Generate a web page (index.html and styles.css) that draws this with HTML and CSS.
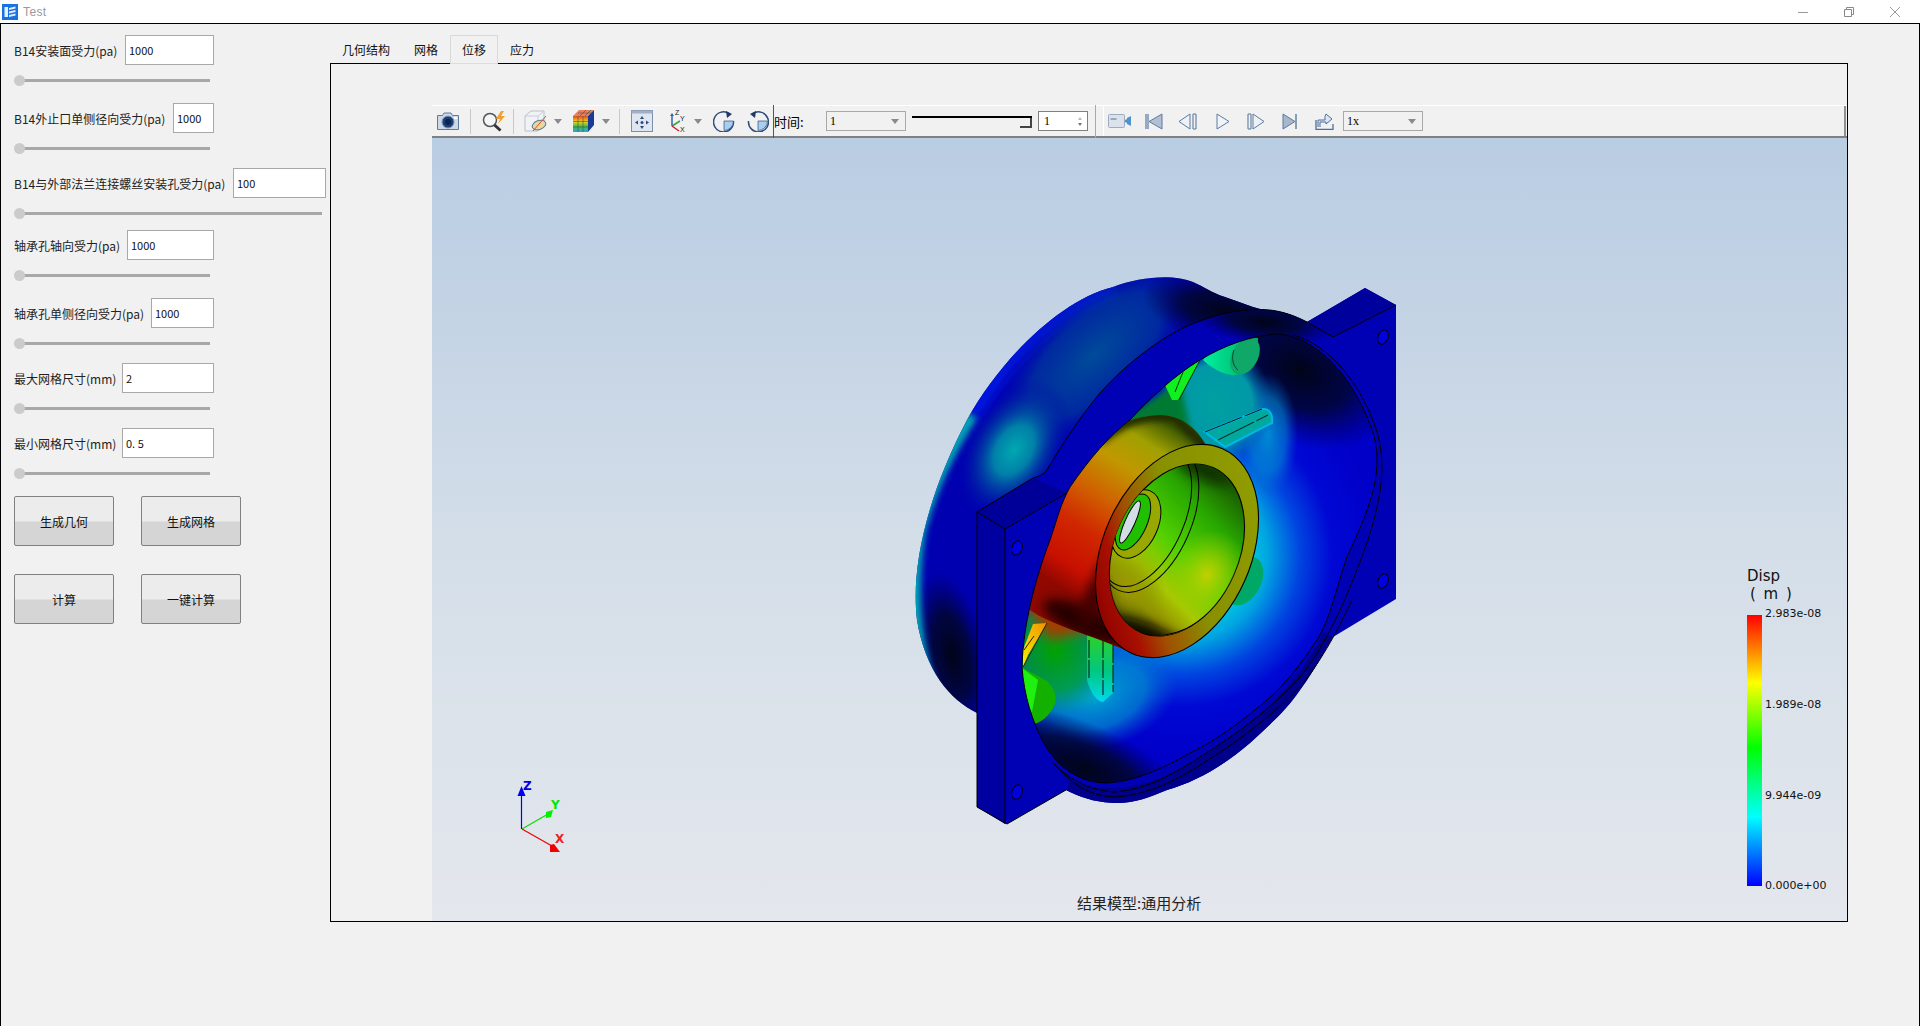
FILE: index.html
```html
<!DOCTYPE html>
<html lang="zh">
<head>
<meta charset="utf-8">
<title>Test</title>
<link rel="stylesheet" href="styles.css">
</head>
<body>
<div class="window">
  <header class="titlebar">
    <svg class="logo" width="16" height="16" viewBox="0 0 16 16"><rect width="16" height="16" fill="#1673e0"/><path d="M2.500 3h3.500v10H2.500zM7 4l6.500-1.500v2L7 6zM7 7.500l6.500-1.500v2L7 9.500zM7 11l6.500-1.500v2L7 13z" fill="#e4f0ff"/></svg>
    <span class="title">Test</span>
    <div class="winbtns">
      <span class="winbtn"><svg width="12" height="12" viewBox="0 0 12 12"><path d="M1 6.500h10" stroke="#999" fill="none"/></svg></span>
      <span class="winbtn"><svg width="12" height="12" viewBox="0 0 12 12"><path d="M1.500 3.500h7v7h-7zM3.500 3.500v-2h7v7h-2" stroke="#888" fill="none"/></svg></span>
      <span class="winbtn"><svg width="12" height="12" viewBox="0 0 12 12"><path d="M1 1l10 10M11 1L1 11" stroke="#999" fill="none"/></svg></span>
    </div>
  </header>
  <div class="main">
    <aside class="sidebar">
      <div class="field f1"><div class="row"><label class="lab">B14安装面受力(pa)</label><input class="inp i89" value="1000"></div><div class="slider"></div></div>
      <div class="field f2"><div class="row"><label class="lab">B14外止口单侧径向受力(pa)</label><input class="inp i41" value="1000"></div><div class="slider"></div></div>
      <div class="field f3 wide"><div class="row"><label class="lab">B14与外部法兰连接螺丝安装孔受力(pa)</label><input class="inp i93" value="100"></div><div class="slider"></div></div>
      <div class="field f4"><div class="row"><label class="lab">轴承孔轴向受力(pa)</label><input class="inp i87" value="1000"></div><div class="slider"></div></div>
      <div class="field f5"><div class="row"><label class="lab">轴承孔单侧径向受力(pa)</label><input class="inp i63" value="1000"></div><div class="slider"></div></div>
      <div class="field f5"><div class="row"><label class="lab">最大网格尺寸(mm)</label><input class="inp i92" value="2"></div><div class="slider"></div></div>
      <div class="field f6"><div class="row"><label class="lab">最小网格尺寸(mm)</label><input class="inp i92" value="0. 5"></div><div class="slider"></div></div>
      <div class="btns">
        <button class="btn">生成几何</button><button class="btn">生成网格</button>
        <button class="btn">计算</button><button class="btn">一键计算</button>
      </div>
    </aside>
    <section class="content">
      <nav class="tabs">
        <span class="tab">几何结构</span><span class="tab">网格</span><span class="tab active">位移</span><span class="tab">应力</span>
      </nav>
      <div class="pane">
        <div class="viewer">
          <div class="toolbar">
            <svg class="ml4" width="24" height="20" viewBox="0 0 24 20"><path d="M1.500 4.500h5l1.500-2.500h7l1.500 2.500h6v14h-21z" fill="#cfd9e6" stroke="#5d7aa0"/><circle cx="12" cy="11" r="6" fill="#1d3f78" stroke="#7d97b8"/><circle cx="12" cy="11" r="3" fill="#0d2350"/><rect x="18" y="6" width="3" height="2" fill="#fff"/></svg>
            <i class="sep ml10"></i>
            <svg class="ml10" width="26" height="22" viewBox="0 0 26 22"><circle cx="9" cy="10" r="6.500" fill="#f4f7fa" stroke="#555" stroke-width="1.500"/><path d="M13.500 15l6 5.500" stroke="#333" stroke-width="3"/><path d="M20 1l-5 8h4l-2 5 7-8h-4l3-5z" fill="#f0a030"/></svg>
            <i class="sep ml6"></i>
            <svg class="ml10" width="24" height="24" viewBox="0 0 24 24"><path d="M1 7l6-5h13v14l-6 6H1z" fill="#f0f2f5" stroke="#b8bfc8"/><path d="M1 7h13v15M14 7l6-5" fill="none" stroke="#c8ced6"/><ellipse cx="15" cy="16" rx="7" ry="4.500" fill="#e8d8a0" stroke="#5d7aa0" transform="rotate(-20 15 16)"/><path d="M9 22L22 7" stroke="#d0502a"/></svg>
            <svg class="ml6" width="8" height="5" viewBox="0 0 8 5"><path d="M0 0h8L4 5z" fill="#8a8a8a"/></svg>
            <svg class="ml10" width="24" height="24" viewBox="0 0 24 24"><path d="M1 7h15v16H1z" fill="url(#cubeF)"/><path d="M1 7l6-6h15l-6 6z" fill="#e88060"/><path d="M16 7l6-6v15l-6 7z" fill="#1a3a98"/><path d="M6 7v16M11 7v16M1 12.500h15M1 18h15M6 4h15M8 7l6-6M13 7l6-6" stroke="#465048" stroke-width=".6" fill="none"/></svg>
            <svg class="ml6" width="8" height="5" viewBox="0 0 8 5"><path d="M0 0h8L4 5z" fill="#8a8a8a"/></svg>
            <i class="sep ml9"></i>
            <svg class="ml11" width="22" height="22" viewBox="0 0 22 22"><rect x=".5" y=".5" width="21" height="21" fill="#dfe6ef" stroke="#7b8fae"/><rect x=".5" y=".5" width="21" height="3" fill="#9fb0c8"/><path d="M11 6l2 3H9zM11 19l2-3H9zM4 12.500l3-2v4zM18 12.500l-3-2v4z" fill="#2f4d7c"/><circle cx="11" cy="12.500" r="1.500" fill="#2f4d7c"/></svg>
            <svg class="ml14" width="20" height="24" viewBox="0 0 20 24"><path d="M5 17V6" stroke="#2a66b0" stroke-width="1.500"/><path d="M5 17l8-5" stroke="#3aa040" stroke-width="1.500"/><path d="M5 17l7 5" stroke="#d02030" stroke-width="1.500"/><path d="M3 7l2-3 2 3z" fill="#2a66b0"/><text x="8" y="6" class="axt">Z</text><text x="13" y="12" class="axt">Y</text><text x="13" y="23" class="axt">X</text></svg>
            <svg class="ml7" width="8" height="5" viewBox="0 0 8 5"><path d="M0 0h8L4 5z" fill="#8a8a8a"/></svg>
            <svg class="ml11" width="22" height="22" viewBox="0 0 22 22"><path d="M16 3.500A10 10 0 1 0 20.500 11" fill="none" stroke="#2f4d7c" stroke-width="1.500"/><path d="M13 1l6 3-5 4z" fill="#1d3a68"/><path d="M11 11h9.500a9.500 9.500 0 0 1-9.500 9.500z" fill="#a8cdf0" stroke="#2f4d7c" stroke-width=".7"/></svg>
            <svg class="ml12" width="22" height="22" viewBox="0 0 22 22"><path d="M6 3.500A10 10 0 1 1 1.500 11" fill="none" stroke="#2f4d7c" stroke-width="1.500"/><path d="M9 1L3 4l5 4z" fill="#1d3a68"/><path d="M11 11h9.500A9.500 9.500 0 0 1 11 20.500z" fill="#a8cdf0" stroke="#2f4d7c" stroke-width=".7"/></svg>
            <i class="vline ml4"></i>
            <span class="timelabel">时间:</span>
            <span class="combo"><span class="val">1</span><b class="cv"></b></span>
            <div class="timeslider ml6"></div>
            <span class="spin ml6"><span class="val">1</span><span class="spinarrows"><b class="up"></b><b class="dn"></b></span></span>
            <i class="vline2 ml7"></i>
            <div class="toolbar2 ml7">
              <svg width="24" height="16" viewBox="0 0 24 16"><rect x=".5" y="1.500" width="16" height="13" rx="1" fill="#dbe2ec" stroke="#9aabc2"/><rect x="2.500" y="5" width="6" height="2" fill="#9aa8ba"/><path d="M17 7l2-1v4l-2-1zM19 5l4-2v10l-4-2z" fill="#4f93c8"/></svg>
              <svg class="ml13" width="18" height="17" viewBox="0 0 18 17"><path d="M1 1v15M3 1v15" stroke="#5d7aa0" stroke-width="1.200"/><path d="M17 1v15L4 8.500z" fill="#b0bfd2" stroke="#5d7aa0"/></svg>
              <svg class="ml15" width="19" height="17" viewBox="0 0 19 17"><path d="M12 1v15L1 8.500z" fill="#eef2f7" stroke="#5d7aa0"/><path d="M15 1v15M18 1v15M15 1h3M15 16h3" stroke="#5d7aa0" fill="none" stroke-width="1.100"/></svg>
              <svg class="ml19" width="14" height="17" viewBox="0 0 14 17"><path d="M1 1v15l12-7.500z" fill="#f0f3f8" stroke="#5d7aa0"/></svg>
              <svg class="ml17" width="18" height="17" viewBox="0 0 18 17"><path d="M1 1v15M4 1v15M1 1h3M1 16h3" stroke="#5d7aa0" fill="none" stroke-width="1.100"/><path d="M6 1v15l11-7.500z" fill="#eef2f7" stroke="#5d7aa0"/></svg>
              <svg class="ml17" width="16" height="17" viewBox="0 0 16 17"><path d="M1 1v15l12-7.500z" fill="#a8b8cc" stroke="#5d7aa0"/><path d="M14 1v15" stroke="#5d7aa0" stroke-width="1.400"/></svg>
              <svg class="ml17" width="19" height="18" viewBox="0 0 19 18"><path d="M3 15V8h7V4.500L11 2l6 5-6 5V10H5v5" fill="#dde6f0" stroke="#4d6f9e"/><path d="M1 8v9.500h17V12" fill="none" stroke="#4d6f9e" stroke-width="1.300"/></svg>
              <span class="combo ml9"><span class="val">1x</span><b class="cv"></b></span>
            </div>
          </div>
          <div class="canvas">
            <svg class="scene" viewBox="432 138 1415 783" width="1415" height="783">
              <defs>
                <linearGradient id="cubeF" x1="0" y1="0" x2="0" y2="1"><stop offset="0" stop-color="#e04a20"/><stop offset=".35" stop-color="#f0d020"/><stop offset=".65" stop-color="#40c040"/><stop offset="1" stop-color="#30a0e0"/></linearGradient>
                <filter id="b3" filterUnits="userSpaceOnUse" x="800" y="200" width="700" height="720"><feGaussianBlur stdDeviation="3"/></filter>
                <filter id="b6" filterUnits="userSpaceOnUse" x="800" y="200" width="700" height="720"><feGaussianBlur stdDeviation="6"/></filter>
                <clipPath id="cDome"><path d="M977 713C950 700 925 670 917 620C911 570 925 500 967 420C1000 360 1060 300 1113 287C1140 276 1175 274 1193 282C1205 287 1210 292 1225 297L1253 307L1307 322L1340 400L1100 600Z"/></clipPath>
                <clipPath id="cBody"><path d="M977 512L1033 478C1040 476 1044 474 1047 470C1062 445 1080 417 1100 393C1125 365 1155 342 1183 328C1205 318 1225 312 1247 310C1262 309 1280 308 1307 322L1365 288L1396 305V599L1333 637C1325 650 1315 670 1300 690C1285 712 1268 726 1250 743C1222 767 1195 782 1167 790C1150 797 1135 803 1117 803C1100 803 1085 799 1070 792L1066 790L1007 824L977 807Z"/></clipPath>
                <clipPath id="cOpen"><path d="M1277 334C1318 336 1356 380 1374 436C1384 475 1368 512 1347 557C1337 585 1330 620 1317 640C1300 665 1285 685 1267 700C1240 723 1215 741 1190 753C1160 770 1135 781 1107 783C1082 783 1060 770 1045 745C1032 722 1024 695 1022 667C1023 625 1035 580 1050 540C1057 520 1060 505 1070 487C1090 458 1110 435 1130 420C1150 398 1175 375 1200 360C1225 345 1250 336 1277 334Z"/></clipPath>
                <clipPath id="cBarrel"><path d="M1207 447C1195 425 1180 416 1160 415C1135 416 1110 425 1090 440L1040 520L1030 610C1050 625 1095 636 1125 650L1180 550Z"/></clipPath>
                <clipPath id="cHub"><ellipse cx="1177" cy="550" rx="62" ry="90" transform="rotate(24 1177 550)"/></clipPath>
                <radialGradient id="halo" gradientUnits="userSpaceOnUse" cx="1180" cy="555" r="200">
                  <stop offset="0" stop-color="#00d0e8"/><stop offset=".36" stop-color="#00c0e4"/><stop offset=".44" stop-color="#00a4e0"/><stop offset=".6" stop-color="#0044e0"/><stop offset=".76" stop-color="#0008d4"/><stop offset="1" stop-color="#0000c8"/>
                </radialGradient>
                <radialGradient id="gTeal"><stop offset="0" stop-color="#00a8b0"/><stop offset=".35" stop-color="#0080a8"/><stop offset=".65" stop-color="#0040a0" stop-opacity=".6"/><stop offset="1" stop-color="#0000b0" stop-opacity="0"/></radialGradient>
                <radialGradient id="gHaze"><stop offset="0" stop-color="#005098" stop-opacity=".95"/><stop offset=".6" stop-color="#004098" stop-opacity=".65"/><stop offset="1" stop-color="#0000b0" stop-opacity="0"/></radialGradient>
                <radialGradient id="gDark"><stop offset="0" stop-color="#000418"/><stop offset=".5" stop-color="#000630" stop-opacity=".85"/><stop offset="1" stop-color="#000050" stop-opacity="0"/></radialGradient>
                <radialGradient id="gGreen"><stop offset="0" stop-color="#00a400"/><stop offset=".6" stop-color="#00a040" stop-opacity=".85"/><stop offset="1" stop-color="#00a0a0" stop-opacity="0"/></radialGradient>
                <radialGradient id="gCyan"><stop offset="0" stop-color="#00a8d0"/><stop offset=".6" stop-color="#0090d0" stop-opacity=".7"/><stop offset="1" stop-color="#0060d0" stop-opacity="0"/></radialGradient>
                <radialGradient id="gTealIn"><stop offset="0" stop-color="#00a0a0"/><stop offset=".65" stop-color="#0098a8"/><stop offset="1" stop-color="#0060b0" stop-opacity="0"/></radialGradient>
                <radialGradient id="gOlive"><stop offset="0" stop-color="#a09800"/><stop offset="1" stop-color="#80a000" stop-opacity="0"/></radialGradient>
                <radialGradient id="gYellow"><stop offset="0" stop-color="#c0d000"/><stop offset="1" stop-color="#a0d000" stop-opacity="0"/></radialGradient>
                <linearGradient id="barrel" gradientUnits="userSpaceOnUse" x1="1170" y1="425" x2="1065" y2="590">
                  <stop offset="0" stop-color="#3e5a00"/><stop offset=".14" stop-color="#a0a000"/><stop offset=".3" stop-color="#c09800"/><stop offset=".5" stop-color="#d06000"/><stop offset=".68" stop-color="#d02800"/><stop offset=".88" stop-color="#c81000"/><stop offset="1" stop-color="#900800"/>
                </linearGradient>
                <linearGradient id="ring" gradientUnits="userSpaceOnUse" x1="1250" y1="490" x2="1105" y2="620">
                  <stop offset="0" stop-color="#909c00"/><stop offset=".45" stop-color="#889000"/><stop offset=".68" stop-color="#a05000"/><stop offset=".82" stop-color="#a81000"/><stop offset="1" stop-color="#8c0000"/>
                </linearGradient>
                <linearGradient id="hub" gradientUnits="userSpaceOnUse" x1="1215" y1="470" x2="1150" y2="630">
                  <stop offset="0" stop-color="#1a5400"/><stop offset=".25" stop-color="#28a800"/><stop offset=".5" stop-color="#50d000"/><stop offset=".72" stop-color="#a8c800"/><stop offset=".88" stop-color="#908800"/><stop offset="1" stop-color="#282000"/>
                </linearGradient>
                <linearGradient id="bossA" x1="0" y1="0" x2="1" y2="0"><stop offset="0" stop-color="#00f0a0"/><stop offset="1" stop-color="#00a860"/></linearGradient>
                <linearGradient id="ribV" x1="0" y1="0" x2="0" y2="1"><stop offset="0" stop-color="#30d020"/><stop offset=".55" stop-color="#00c880"/><stop offset="1" stop-color="#00d8f0"/></linearGradient>
                <linearGradient id="spotY" x1="1" y1="0" x2="0" y2="1"><stop offset="0" stop-color="#f09000"/><stop offset="1" stop-color="#f8f000"/></linearGradient>
              </defs>

              <!-- back dome -->
              <g clip-path="url(#cDome)">
                <rect x="900" y="260" width="460" height="470" fill="#0000b0"/>
                <path d="M972 415C1000 365 1050 310 1113 287" fill="none" stroke="#0014e0" stroke-width="18" filter="url(#b6)"/>
                <ellipse cx="1095" cy="355" rx="62" ry="135" transform="rotate(47 1095 355)" fill="url(#gHaze)"/>
                <ellipse cx="1014" cy="450" rx="50" ry="76" transform="rotate(30 1014 450)" fill="url(#gTeal)"/>
                <ellipse cx="952" cy="655" rx="36" ry="85" transform="rotate(-12 952 655)" fill="url(#gDark)"/>
                <path d="M932 690C915 650 910 590 920 530C932 485 950 450 972 415" fill="none" stroke="#00a8b4" stroke-width="12" filter="url(#b3)"/>
                <ellipse cx="1225" cy="312" rx="85" ry="36" transform="rotate(14 1225 312)" fill="url(#gDark)"/>
              </g>

              <!-- front body with flanges -->
              <path d="M977 512L1033 478C1040 476 1044 474 1047 470C1062 445 1080 417 1100 393C1125 365 1155 342 1183 328C1205 318 1225 312 1247 310C1262 309 1280 308 1307 322L1365 288L1396 305V599L1333 637C1325 650 1315 670 1300 690C1285 712 1268 726 1250 743C1222 767 1195 782 1167 790C1150 797 1135 803 1117 803C1100 803 1085 799 1070 792L1066 790L1007 824L977 807Z" fill="#0000b4"/>
              <g clip-path="url(#cBody)">
                <ellipse cx="1265" cy="322" rx="70" ry="22" transform="rotate(6 1265 322)" fill="url(#gDark)"/>
                <path d="M1333 637C1310 690 1265 730 1200 770C1160 795 1110 810 1066 790" fill="none" stroke="#00008c" stroke-width="22"/>
              </g>
              <path d="M977 512L1033 478L1067 493L1005 529Z" fill="#000098"/>
              <path d="M1307 322L1365 288L1396 305L1333 337Z" fill="#00009c"/>
              <path d="M977 512L1005 529V824L977 807Z" fill="#0000a0"/>

              <!-- opening interior -->
              <g clip-path="url(#cOpen)">
                <rect x="1010" y="320" width="380" height="480" fill="#0000c8"/>
                <ellipse cx="1180" cy="555" rx="200" ry="200" fill="url(#halo)"/>
                <ellipse cx="1300" cy="370" rx="105" ry="72" transform="rotate(25 1300 370)" fill="url(#gDark)"/>
                <ellipse cx="1268" cy="435" rx="30" ry="62" fill="url(#gCyan)" opacity=".8"/>
                <ellipse cx="1215" cy="405" rx="58" ry="62" fill="url(#gTealIn)"/>
                <path d="M1120 420L1180 380L1192 440L1130 470Z" fill="#007a30" filter="url(#b3)"/>
                <ellipse cx="1095" cy="695" rx="85" ry="55" transform="rotate(-15 1095 695)" fill="url(#gCyan)"/>
                <ellipse cx="1055" cy="650" rx="62" ry="68" fill="url(#gGreen)"/>
                <path d="M1020 600L1060 560L1090 630L1050 640Z" fill="#a04000" filter="url(#b6)"/>
                <ellipse cx="1085" cy="768" rx="115" ry="44" transform="rotate(24 1085 768)" fill="url(#gDark)"/>
                <!-- bosses -->
                <path d="M1203 360C1215 345 1240 335 1258 338L1258 352C1255 365 1240 377 1232 375C1222 374 1210 367 1203 360Z" fill="url(#bossA)"/>
                <ellipse cx="1245" cy="356" rx="13" ry="20" transform="rotate(28 1245 356)" fill="#10a868"/>
                <path d="M1234 350C1231 358 1233 366 1238 370" fill="none" stroke="#004a30"/>
                <path d="M1165 385L1188 368L1200 360L1178 400L1172 400Z" fill="#10f020"/>
                <path d="M1183 372L1175 392M1200 360L1179 400" stroke="#003000" fill="none"/>
                <path d="M1205 432L1262 409C1270 408 1273 415 1272 423L1225 447Z" fill="#00a8a0" stroke="#00b8e8" stroke-width="2"/>
                <path d="M1205 432L1262 409M1218 440L1268 415" stroke="#001818" stroke-dasharray="40 3" fill="none"/>
                <ellipse cx="1244" cy="581" rx="17" ry="26" transform="rotate(28 1244 581)" fill="#00a868"/>
                <path d="M1087 633L1113 643V693L1103 702C1097 702 1090 692 1087 680Z" fill="url(#ribV)"/>
                <path d="M1089 640V680M1103 640V695M1113 645V692" stroke="#001010" stroke-dasharray="18 2" fill="none"/>
                <path d="M1023 650L1033 624L1047 623L1028 655L1023 667Z" fill="url(#spotY)"/>
                <path d="M1047 623L1023 667M1034 636L1024 650" stroke="#302000" fill="none"/>
                <path d="M1023 668L1047 681C1054 688 1057 695 1055 704C1050 716 1040 724 1032 724L1022 690Z" fill="#14b000"/>
                <path d="M1022 668L1038 680L1032 712L1024 700Z" fill="#20f010"/>
                <!-- barrel, kept inside the opening -->
                <path d="M1207 447C1195 425 1180 416 1160 415C1135 416 1110 425 1090 440L1040 520L1030 610C1050 625 1095 636 1125 650L1180 550Z" fill="url(#barrel)"/>
                <g clip-path="url(#cBarrel)">
                  <path d="M1100 440C1125 420 1150 412 1175 418L1207 447" fill="none" stroke="#202c00" stroke-width="10" filter="url(#b3)"/>
                  <ellipse cx="1085" cy="622" rx="46" ry="15" transform="rotate(24 1085 622)" fill="#280000" filter="url(#b6)"/>
                  <ellipse cx="1098" cy="590" rx="10" ry="40" transform="rotate(24 1098 590)" fill="#400000" filter="url(#b6)"/>
                </g>
              </g>

              <!-- hub front ring -->
              <ellipse cx="1177" cy="551" rx="74" ry="112" transform="rotate(24 1177 551)" fill="url(#ring)" stroke="#000" stroke-width="1.100"/>
              <ellipse cx="1177" cy="550" rx="62" ry="90" transform="rotate(24 1177 550)" fill="url(#hub)" stroke="#000" stroke-width="1.100"/>
              <g clip-path="url(#cHub)">
                <ellipse cx="1128" cy="590" rx="38" ry="48" fill="url(#gOlive)"/>
                <ellipse cx="1155" cy="640" rx="48" ry="12" transform="rotate(24 1155 640)" fill="#100c00" filter="url(#b6)"/>
                <ellipse cx="1205" cy="470" rx="30" ry="10" transform="rotate(24 1205 470)" fill="#103000" filter="url(#b6)"/>
                <ellipse cx="1207" cy="575" rx="38" ry="46" transform="rotate(24 1207 575)" fill="url(#gYellow)"/>
                <ellipse cx="1150" cy="520" rx="41" ry="77" transform="rotate(24 1150 520)" fill="none" stroke="#000"/>
                <ellipse cx="1146" cy="518" rx="38" ry="73" transform="rotate(24 1146 518)" fill="none" stroke="#000"/>
                <ellipse cx="1136" cy="524" rx="22" ry="36" transform="rotate(24 1136 524)" fill="#98a800" stroke="#000"/>
                <ellipse cx="1133" cy="522" rx="14" ry="30" transform="rotate(24 1133 522)" fill="#20c000" stroke="#000"/>
                <ellipse cx="1130" cy="522" rx="5" ry="23" transform="rotate(24 1130 522)" fill="#d3dde8" stroke="#000"/>
                <path d="M1241 572C1228 606 1195 632 1165 636" fill="none" stroke="#000" stroke-width="3"/>
                <path d="M1241 572C1228 606 1195 632 1165 636" fill="none" stroke="#e0e000" stroke-width="1"/>
              </g>

              <!-- edge lines -->
              <g fill="none" stroke="#000" stroke-width="1">
                <path d="M1277 334C1318 336 1356 380 1374 436C1384 475 1368 512 1347 557C1337 585 1330 620 1317 640C1300 665 1285 685 1267 700C1240 723 1215 741 1190 753C1160 770 1135 781 1107 783C1082 783 1060 770 1045 745C1032 722 1024 695 1022 667C1023 625 1035 580 1050 540C1057 520 1060 505 1070 487C1090 458 1110 435 1130 420C1150 398 1175 375 1200 360C1225 345 1250 336 1277 334Z"/>
                <path d="M1053 763C1075 785 1095 790 1113 792C1145 790 1170 776 1200 757C1235 735 1270 710 1300 677C1330 640 1350 590 1368 540C1384 490 1385 460 1377 432C1362 385 1330 345 1293 335"/>
                <path d="M1060 770C1080 792 1098 796 1115 797C1150 795 1180 778 1205 762C1240 740 1275 714 1305 681C1328 650 1340 625 1352 600"/>
                <path d="M1033 478C1040 476 1044 474 1047 470C1062 445 1080 417 1100 393C1125 365 1155 342 1183 328C1205 318 1225 312 1247 310C1262 309 1280 308 1307 322L1333 337"/>
                <path d="M977 512V807L1007 824L1066 790M977 512L1005 529V824M1005 529L1067 493M977 512L1033 478"/>
                <path d="M1333 337L1396 305"/>
              </g>
              <!-- flange bolt holes -->
              <g fill="#0000e0" stroke="#000" stroke-width="1">
                <ellipse cx="1017" cy="548" rx="5" ry="7.500" transform="rotate(20 1017 548)"/>
                <ellipse cx="1017" cy="792" rx="5" ry="7.500" transform="rotate(20 1017 792)"/>
                <ellipse cx="1383" cy="581" rx="5" ry="7.500" transform="rotate(20 1383 581)"/>
                <ellipse cx="1383" cy="337" rx="5" ry="7.500" transform="rotate(20 1383 337)"/>
              </g>

              <!-- axes triad -->
              <path d="M521.500 829V793" stroke="#0000f0" stroke-width="1.200"/>
              <path d="M522 829L548 814" stroke="#00e000" stroke-width="1.200"/>
              <path d="M522 829L552 846" stroke="#f00000" stroke-width="1.200"/>
              <path d="M521.500 786l-4 10h8z" fill="#0000f0"/>
              <path d="M546 812l7-2-2 7-5 1z" fill="#00f000"/>
              <path d="M550 845l4-1 6 8h-10z" fill="#f00000"/>
              <text class="triad" x="523" y="790" fill="#0000e8">Z</text>
              <text class="triad" x="551" y="809" fill="#00e800">Y</text>
              <text class="triad" x="555" y="843" fill="#f02020">X</text>
            </svg>
            <div class="legend">
              <div class="legtitle">Disp<br><span class="legunit">( m )</span></div>
              <div class="legbar"></div>
              <span class="leglab l1">2.983e-08</span>
              <span class="leglab l2">1.989e-08</span>
              <span class="leglab l3">9.944e-09</span>
              <span class="leglab l4">0.000e+00</span>
            </div>
            <div class="caption">结果模型:通用分析</div>
          </div>
        </div>
      </div>
    </section>
  </div>
</div>
</body>
</html>
```
FILE: styles.css
```css
* { box-sizing: border-box; }
html, body { margin: 0; padding: 0; }
body {
  width: 1920px;
  height: 1026px;
  overflow: hidden;
  background: #f1f1f1;
  font-family: "Noto Sans CJK SC", "Liberation Sans", sans-serif;
  font-size: 12px;
  color: #111;
}
.window { display: flex; flex-direction: column; height: 1026px; }
.titlebar {
  height: 23px;
  flex: none;
  background: #fff;
  display: flex;
  align-items: center;
  padding-left: 2px;
}
.logo { flex: none; }
.title { margin-left: 5px; color: #9a9aa0; font-family: "Liberation Sans", sans-serif; font-size: 12px; letter-spacing: .4px; }
.winbtns { margin-left: auto; display: flex; padding-right: 2px; }
.winbtn { width: 46px; display: flex; justify-content: center; align-items: center; }
.main {
  flex: 1;
  display: flex;
  border: 1px solid #000;
  border-bottom: 0;
  min-height: 0;
}

/* sidebar */
.sidebar { width: 329px; flex: none; padding: 11px 0 0 13px; }
.field { width: 200px; }
.field.wide { width: 312px; }
.f1, .f4 { margin-bottom: 18px; }
.f2, .f5 { margin-bottom: 15px; }
.f3 { margin-bottom: 12px; }
.f6 { margin-bottom: 18px; }
.row { display: flex; align-items: center; height: 30px; }
.lab { flex: 1; white-space: nowrap; color: #222; font-size: 12px; }
.inp {
  flex: none;
  height: 30px;
  border: 1px solid #a8a8a8;
  background: #fff;
  padding: 0 3px;
  font: 11px "Noto Sans CJK SC", "Liberation Sans", sans-serif;
  color: #111;
  outline: none;
}
.i89 { width: 89px; }
.i41 { width: 41px; }
.i93 { width: 93px; }
.i87 { width: 87px; }
.i63 { width: 63px; }
.i92 { width: 92px; }
.slider {
  position: relative;
  margin-top: 10px;
  height: 10px;
  width: 196px;
}
.wide .slider { width: 308px; }
.slider::before {
  content: "";
  position: absolute;
  left: 5px;
  right: 0;
  top: 4px;
  height: 3px;
  background: #a8a8a8;
}
.slider::after {
  content: "";
  position: absolute;
  left: 0;
  top: 0;
  width: 11px;
  height: 11px;
  border-radius: 50%;
  background: #cbcbcb;
}
.btns {
  display: grid;
  grid-template-columns: 100px 100px;
  column-gap: 27px;
  row-gap: 28px;
}
.btn {
  height: 50px;
  border: 1px solid #808080;
  border-radius: 2px;
  background: linear-gradient(#ececec 0, #ececec 50%, #d5d5d5 52%, #d5d5d5 100%);
  font: 12px "Noto Sans CJK SC", sans-serif;
  color: #111;
  padding: 0;
}

/* tabs and pane */
.content { flex: 1; min-width: 0; display: flex; flex-direction: column; padding: 11px 71px 0 0; }
.tabs { display: flex; height: 28px; flex: none; position: relative; z-index: 1; }
.tab {
  height: 29px;
  line-height: 27px;
  border: 1px solid transparent;
  border-bottom: 0;
  font-size: 12px;
  color: #111;
  width: 48px;
  text-align: center;
  white-space: nowrap;
}
.tab:first-child { width: 72px; }
.tab.active { border-color: #d8d8d8; border-bottom: 1px solid #dcdcdc; background: #f1f1f1; }
.pane {
  height: 859px;
  flex: none;
  border: 1px solid #000;
  padding: 41px 0 0 101px;
}
.viewer { height: 100%; display: flex; flex-direction: column; }

/* toolbar */
.toolbar {
  height: 33px;
  flex: none;
  display: flex;
  align-items: center;
  background: #f1f1f1;
  border-top: 1px solid #fff;
  border-bottom: 2px solid #808080;
}
.toolbar svg { flex: none; }
.sep { width: 1px; height: 25px; background: #c8c8c8; flex: none; }
.vline { width: 1px; height: 33px; background: #555; flex: none; align-self: flex-start; margin-top: -1px; }
.vline2 { width: 1px; height: 33px; background: #a8a8a8; flex: none; align-self: flex-start; margin-top: -1px; }
.toolbar2 {
  flex: 1;
  align-self: stretch;
  display: flex;
  align-items: center;
  padding-left: 4px;
  border-left: 1px solid #fff;
  border-right: 2px solid #909090;
  margin-right: 1px;
}
.axt { font: 7px "Liberation Sans", sans-serif; fill: #222; }
.timelabel { width: 52px; flex: none; font-size: 13px; color: #000; line-height: 1; }
.combo {
  width: 80px;
  height: 20px;
  flex: none;
  border: 1px solid #a8a8a8;
  display: flex;
  align-items: center;
  padding: 0 6px 0 3px;
  justify-content: space-between;
}
.val { font: 12px "Liberation Serif", serif; color: #000; }
.cv { width: 0; height: 0; border: 4px solid transparent; border-top: 5px solid #8a8a8a; border-bottom: 0; }
.timeslider {
  width: 120px;
  height: 12px;
  flex: none;
  align-self: flex-start;
  margin-top: 10px;
  position: relative;
  border-top: 2px solid #000;
}
.timeslider::after {
  content: "";
  position: absolute;
  right: 0;
  top: 0;
  width: 10px;
  height: 8px;
  border-right: 2px solid #444;
  border-bottom: 2px solid #444;
}
.spin {
  width: 50px;
  height: 20px;
  flex: none;
  background: #fff;
  border: 1px solid #808080;
  display: flex;
  align-items: center;
  justify-content: space-between;
  padding: 0 5px;
}
.spinarrows { display: flex; flex-direction: column; gap: 3px; }
.spinarrows b { width: 0; height: 0; border: 2.5px solid transparent; }
.spinarrows .up { border-top: 0; border-bottom: 3px solid #bbb; }
.spinarrows .dn { border-bottom: 0; border-top: 3px solid #777; }

/* margin helpers for toolbar slots */
.ml4 { margin-left: 4px; }
.ml6 { margin-left: 6px; }
.ml7 { margin-left: 7px; }
.ml9 { margin-left: 9px; }
.ml10 { margin-left: 10px; }
.ml11 { margin-left: 11px; }
.ml12 { margin-left: 12px; }
.ml13 { margin-left: 13px; }
.ml14 { margin-left: 14px; }
.ml15 { margin-left: 15px; }
.ml17 { margin-left: 17px; }
.ml19 { margin-left: 19px; }

/* canvas */
.canvas {
  flex: 1;
  position: relative;
  background: linear-gradient(#b9cde3 0%, #c5d4e5 25%, #d5dfe9 55%, #e4e7ed 100%);
  overflow: hidden;
}
.scene { display: block; }
.triad { font: bold 12px "DejaVu Sans", sans-serif; }
.legend { position: absolute; left: 1315px; top: 429px; width: 100px; height: 330px; }
.legtitle { position: absolute; left: 0; top: 0; font: 15px/18px "DejaVu Sans", sans-serif; color: #111; white-space: nowrap; }
.legunit { word-spacing: 3px; padding-left: 3px; }
.legbar { position: absolute; left: 0; top: 48px; width: 15px; height: 271px; background: linear-gradient(#f00 0, #ff0 25%, #0f0 49%, #0ff 74.500%, #00f 100%); }
.leglab { position: absolute; left: 18px; font: 11px/14px "DejaVu Sans", sans-serif; color: #111; white-space: nowrap; }
.l1 { top: 40px; }
.l2 { top: 131px; }
.l3 { top: 222px; }
.l4 { top: 312px; }
.caption { position: absolute; left: 645px; top: 755px; font-size: 15px; line-height: 20px; color: #222; white-space: nowrap; }
```
